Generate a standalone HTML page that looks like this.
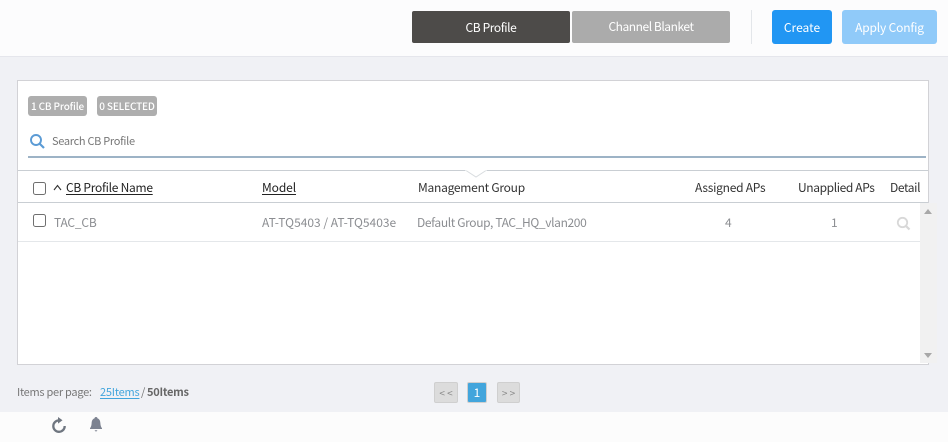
<!DOCTYPE html>
<html><head><meta charset="utf-8"><style>
html,body{margin:0;padding:0}
body{width:948px;height:442px;position:relative;overflow:hidden;background:#f0f1f5;font-family:"Noto Sans CJK JP","Liberation Sans",sans-serif;font-size:12px;color:#333}
.a{position:absolute}
.t{position:absolute;white-space:nowrap;line-height:16px;height:16px}
.g{color:#8c8e92}
.u{text-decoration:underline;text-underline-offset:2px}
.cb{position:absolute;width:10.5px;height:10.5px;border:1.3px solid #6f6f6f;border-radius:2.5px;background:#fff}
.btn{position:absolute;color:#fff;text-align:center;border-radius:2px}
.badge{position:absolute;top:96px;height:20px;line-height:20px;background:#aeaeae;color:#fff;font-size:10px;letter-spacing:-.15px;font-weight:500;text-align:center;border-radius:3px}
.pg{position:absolute;top:382px;height:19px;line-height:19px;border:1px solid #cfcfcf;background:#dcdcdc;border-radius:2px;text-align:center;font-size:10px;color:#888}
</style></head><body>
<div class="a" style="left:0;top:0;width:948px;height:56px;background:#fcfcfd;border-bottom:1px solid #e5e6ec"></div>
<div class="btn" style="left:412px;top:11px;width:158px;height:32px;line-height:33px;background:#4d4b49;letter-spacing:-.4px">CB Profile</div>
<div class="btn" style="left:572px;top:11px;width:158px;height:32px;line-height:31px;background:#ababab;letter-spacing:-.45px;padding-left:0">Channel Blanket</div>
<div class="a" style="left:751px;top:10px;width:1px;height:34px;background:#e3e6ea"></div>
<div class="btn" style="left:772px;top:10px;width:60px;height:34px;line-height:35px;background:#2196f3;border-radius:3px">Create</div>
<div class="btn" style="left:842px;top:10px;width:95px;height:34px;line-height:35px;background:#90caf9;border-radius:3px;letter-spacing:-.17px">Apply Config</div>

<div class="a" style="left:17px;top:80px;width:910px;height:283px;background:#fff;border:1px solid #d2d2d6"></div>
<div class="badge" style="left:28px;width:59px">1 CB Profile</div>
<div class="badge" style="left:97px;width:60px">0 SELECTED</div>
<svg class="a" style="left:29px;top:133px" width="17" height="17" viewBox="0 0 17 17"><circle cx="7" cy="7" r="5" fill="none" stroke="#5b9bd5" stroke-width="1.9"/><path d="M10.6 10.6L15 15" stroke="#5b9bd5" stroke-width="2.2"/></svg>
<div class="t" style="left:52px;top:133px;font-size:11px;color:#777;letter-spacing:-.3px">Search CB Profile</div>
<div class="a" style="left:28px;top:156px;width:898px;height:2px;background:#9db3c6"></div>

<div class="a" style="left:18px;top:170px;width:910px;height:1px;background:#c9ced3"></div>
<svg class="a" style="left:465px;top:169px" width="22" height="9" viewBox="0 0 22 9"><path d="M1 1.5L11 8L21 1.5" fill="#fff" stroke="#d8dcdf"/><path d="M0 0.5H22" stroke="#fff" stroke-width="2"/></svg>
<div class="a" style="left:18px;top:202px;width:910px;height:1px;background:#c9ced3"></div>
<div class="cb" style="left:33px;top:182px"></div>
<svg class="a" style="left:53px;top:184px" width="9" height="7" viewBox="0 0 9 7"><path d="M1 6L4.5 1.5L8 6" fill="none" stroke="#333" stroke-width="1.1"/></svg>
<div class="t u" style="left:66px;top:180px;color:#222;letter-spacing:-.27px">CB Profile Name</div>
<div class="t u" style="left:262px;top:180px;color:#222;letter-spacing:-.1px">Model</div>
<div class="t" style="left:418px;top:180px;letter-spacing:-.25px">Management Group</div>
<div class="t" style="left:695px;top:180px;letter-spacing:-.25px">Assigned APs</div>
<div class="t" style="left:798px;top:180px;letter-spacing:-.38px">Unapplied APs</div>
<div class="t" style="left:890px;top:180px;letter-spacing:-.4px">Detail</div>

<div class="cb" style="left:33px;top:214px"></div>
<div class="t g" style="left:54px;top:215px;letter-spacing:-.2px">TAC_CB</div>
<div class="t g" style="left:262px;top:215px">AT-TQ5403 / AT-TQ5403e</div>
<div class="t g" style="left:417px;top:215px;letter-spacing:-.37px">Default Group, TAC_HQ_vlan200</div>
<div class="t g" style="left:725px;top:215px">4</div>
<div class="t g" style="left:831px;top:215px">1</div>
<svg class="a" style="left:896px;top:216px" width="15" height="15" viewBox="0 0 15 15"><circle cx="6.5" cy="6.5" r="4.7" fill="none" stroke="#d8d8d8" stroke-width="1.8"/><path d="M10 10L13.5 13.5" stroke="#d8d8d8" stroke-width="2.2"/></svg>
<div class="a" style="left:18px;top:241px;width:902px;height:1px;background:#e4e7ea"></div>

<div class="a" style="left:920px;top:203px;width:17px;height:160px;background:#f1f1f1"></div>
<div class="a" style="left:924px;top:209px;width:0;height:0;border-left:4px solid transparent;border-right:4px solid transparent;border-bottom:5px solid #a8a8a8"></div>
<div class="a" style="left:924px;top:353px;width:0;height:0;border-left:4px solid transparent;border-right:4px solid transparent;border-top:5px solid #a8a8a8"></div>

<div class="t" style="left:17px;top:384px;font-size:11px;color:#777;letter-spacing:-.27px">Items per page:</div>
<div class="t" style="left:100px;top:384px;font-size:11px;color:#42a5dc;text-decoration:underline;text-underline-offset:2px;letter-spacing:-.2px">25Items</div>
<div class="t" style="left:141px;top:384px;font-size:11px;color:#777">/</div>
<div class="t" style="left:147px;top:384px;font-size:11px;color:#666;font-weight:bold;letter-spacing:-.25px">50Items</div>

<div class="pg" style="left:434px;width:22px">&lt; &lt;</div>
<div class="pg" style="left:467px;width:18px;background:#42a5dc;color:#fff;font-size:12px">1</div>
<div class="pg" style="left:497px;width:21px">&gt; &gt;</div>

<div class="a" style="left:0;top:412px;width:948px;height:30px;background:#fcfcfc"></div>
<svg class="a" style="left:51px;top:416px" width="16" height="17" viewBox="0 0 16 17"><path d="M8 4.4A5.7 5.7 0 1 0 13.7 10" fill="none" stroke="#6f7680" stroke-width="2.3"/><path d="M7 1L11.5 4.3L7 7.6Z" fill="#6f7680"/></svg>
<svg class="a" style="left:89px;top:416px" width="14" height="17" viewBox="0 0 14 17"><path d="M7 1C8 1 8.4 1.6 8.5 2.4C10.6 3 11.3 5 11.4 7.5C11.5 9.6 12 10.8 13 12.3V13H1V12.3C2 10.8 2.5 9.6 2.6 7.5C2.7 5 3.4 3 5.5 2.4C5.6 1.6 6 1 7 1Z" fill="#7c8290"/><path d="M5.5 14.2H8.5L7 15.8Z" fill="#7c8290"/></svg>
</body></html>
